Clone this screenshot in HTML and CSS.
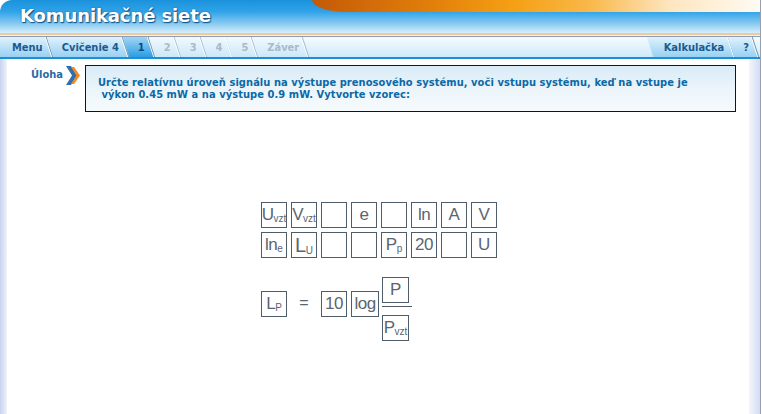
FILE: index.html
```html
<!DOCTYPE html>
<html lang="sk">
<head>
<meta charset="utf-8">
<title>Komunikačné siete</title>
<link rel="stylesheet" href="styles.css">
</head>
<body>
<div class="app">
  <header class="hdr">
    <div class="orange"></div>
    <h1 class="title">Komunikačné siete</h1>
  </header>
  <div class="hdr-lines"><div class="l1"></div><div class="l2"></div><div class="l3"></div></div>
  <nav class="tabbar">
    <div class="tabs">
      <span class="tab">Menu</span>
      <span class="tab">Cvičenie 4</span>
      <span class="tab active">1</span>
      <span class="tab off">2</span>
      <span class="tab off">3</span>
      <span class="tab off">4</span>
      <span class="tab off">5</span>
      <span class="tab off">Záver</span>
    </div>
    <div class="tabs">
      <span class="tab">Kalkulačka</span>
      <span class="tab">?</span>
    </div>
  </nav>
  <div class="blueline"></div>
  <main class="content">
    <div class="stripe-l"></div>
    <div class="inner">
      <div class="task-row">
        <div class="label">
          <span>Úloha</span>
          <svg class="arrow" width="15" height="19" viewBox="0 0 15 19">
            <polygon points="0,0 5,0 11,9.5 5,19 0,19 6,9.5" fill="#2f6fae"/>
            <polygon points="5,1 8,1 14,9.5 8,18 5,18 10.5,9.5" fill="#f08a24"/>
          </svg>
        </div>
        <div class="task">
          <span class="line">Určte relatívnu úroveň signálu na výstupe prenosového systému, voči vstupu systému, keď na vstupe je</span>
          <span class="line">&nbsp;výkon 0.45 mW a na výstupe 0.9 mW. Vytvorte vzorec:</span>
        </div>
      </div>
      <div class="work">
        <div class="tiles">
          <div class="tile">U<sub>vzt</sub></div>
          <div class="tile">V<sub>vzt</sub></div>
          <div class="tile"></div>
          <div class="tile">e</div>
          <div class="tile"></div>
          <div class="tile">ln</div>
          <div class="tile">A</div>
          <div class="tile">V</div>
          <div class="tile">ln<sub>e</sub></div>
          <div class="tile"><span class="big">L</span><sub>U</sub></div>
          <div class="tile"></div>
          <div class="tile"></div>
          <div class="tile">P<sub>p</sub></div>
          <div class="tile">20</div>
          <div class="tile"></div>
          <div class="tile">U</div>
        </div>
        <div class="formula">
          <div class="tile side">L<sub>P</sub></div>
          <span class="eq side">=</span>
          <div class="tile side">10</div>
          <div class="tile side log">log</div>
          <div class="frac">
            <div class="tile">P</div>
            <div class="bar"></div>
            <div class="tile">P<sub>vzt</sub></div>
          </div>
        </div>
      </div>
    </div>
    <div class="stripe-r"></div>
  </main>
</div>
</body>
</html>
```

FILE: styles.css
```css
* { box-sizing: border-box; }
html, body { margin: 0; padding: 0; background: #fff; }
body { width: 762px; height: 414px; overflow: hidden; font-family: "DejaVu Sans Condensed", "DejaVu Sans", sans-serif; }

.app { width: 761px; height: 414px; display: flex; flex-direction: column; border-right: 1px solid #95a2b6; }

.hdr {
  position: relative;
  height: 33px;
  border-top-left-radius: 12px;
  background: linear-gradient(to bottom, #1a92db 0%, #2fa3e9 35%, #84c8f0 70%, #d6eefb 100%);
  overflow: hidden;
}
.orange {
  position: absolute;
  top: 0; left: 312px; right: 0; height: 12px;
  border-bottom-left-radius: 34px 12px;
  background: linear-gradient(to right, #c45a08 0%, #e07c0a 25%, #f5a014 45%, #f9b84a 62%, #fde6c0 80%, #fffaf2 100%);
}
.title {
  position: relative;
  margin: 0;
  padding: 5px 0 0 20px;
  font-family: "DejaVu Sans", sans-serif;
  font-weight: bold;
  font-size: 18px;
  line-height: 22px;
  letter-spacing: -0.1px;
  color: #fff;
  text-shadow: 1px 1px 1px #0d4f86, 0 0 2px #1a6aa8;
}

.hdr-lines { display: flex; flex-direction: column; }
.hdr-lines .l1 { height: 2px; background: #f1c79c; }
.hdr-lines .l2 { height: 1px; background: #eef3f8; }
.hdr-lines .l3 { height: 1px; background: #8e9db4; }

.tabbar {
  height: 20px;
  display: flex;
  justify-content: space-between;
  background: linear-gradient(to bottom, #f6fbff, #cdeafa);
  overflow: hidden;
  padding: 0 4px 0 0;
}
.tabs { display: flex; }
.tab {
  position: relative;
  isolation: isolate;
  display: flex;
  align-items: center;
  padding: 1px 7px 0 12px;
  font-weight: bold;
  font-size: 11px;
  color: #1b5a8e;
  white-space: nowrap;
}
.tab::before {
  content: "";
  position: absolute;
  inset: 0;
  z-index: -1;
  transform: skewX(18deg);
  background: linear-gradient(to bottom, #dff2fd, #98d1f3);
  border-right: 1px solid #7b93ab;
  box-shadow: inset -1px 0 0 #ffffff;
}
.tabs:first-child .tab:first-child::before { left: -6px; }
.tab.active { color: #0c4a80; }
.tab.active::before { background: linear-gradient(to bottom, #9fd6f6, #2c9de4); }
.tab.off { color: #a9b9c9; }
.tab.off::before { background: linear-gradient(to bottom, #f2f9fe, #cbe8f9); border-right-color: #a7bccf; }
.tabs:last-child .tab:first-child { padding-left: 14px; }

.blueline { height: 2px; background: #1e8fd6; }

.content { flex: 1; display: flex; }
.stripe-l { width: 7px; background: linear-gradient(to right, #c9d3ef, #eef2fb); }
.stripe-r { width: 11px; background: linear-gradient(to right, #f4f6fc, #d3dbf2); }
.inner { flex: 1; }

.task-row { display: flex; padding-top: 6px; }
.label {
  width: 78px;
  padding-left: 24px;
  display: flex;
  align-items: flex-start;
  gap: 3px;
  font-weight: bold;
  font-size: 11px;
  color: #2a6aa8;
}
.label span { margin-top: 3px; }
.arrow { display: block; margin-top: 1px; }
.task {
  width: 651px;
  height: 47px;
  border: 1px solid #151515;
  background: linear-gradient(to bottom, #d9ebf6, #eef6fb 60%, #f6fafd);
  padding: 11px 0 0 12px;
  display: flex;
  flex-direction: column;
  font-weight: bold;
  font-size: 11px;
  line-height: 12px;
  letter-spacing: 0.07px;
  color: #0b69a6;
}
.task .line { white-space: nowrap; }

.work { padding-left: 254px; padding-top: 90px; }
.tiles {
  display: grid;
  grid-template-columns: repeat(8, 26px);
  grid-auto-rows: 26px;
  gap: 4px;
}
.tile {
  width: 26px;
  height: 26px;
  border: 1px solid #4f5d6b;
  background: #fff;
  display: flex;
  align-items: baseline;
  justify-content: center;
  padding-top: 3px;
  font-family: "Liberation Sans", Arial, sans-serif;
  font-size: 17px;
  line-height: 18px;
  color: #5a6571;
  letter-spacing: -0.5px;
}
.tile sub {
  font-size: 10px;
  line-height: 10px;
  vertical-align: baseline;
  position: relative;
  top: 2px;
  letter-spacing: 0;
}
.tile .big { font-size: 20px; }

.formula { display: flex; align-items: flex-start; margin-top: 19px; }
.side { margin-top: 14px; }
.eq {
  width: 34px;
  text-align: center;
  font-family: "Liberation Sans", Arial, sans-serif;
  font-size: 16px;
  line-height: 24px;
  color: #5a6571;
}
.formula .log { width: 28px; margin-left: 4px; }
.frac { margin-left: 3px; display: flex; flex-direction: column; width: 30px; }
.frac .tile { width: 27px; }
.frac .bar { height: 1px; background: #4f5d6b; margin: 3px 0 8px; }
```
